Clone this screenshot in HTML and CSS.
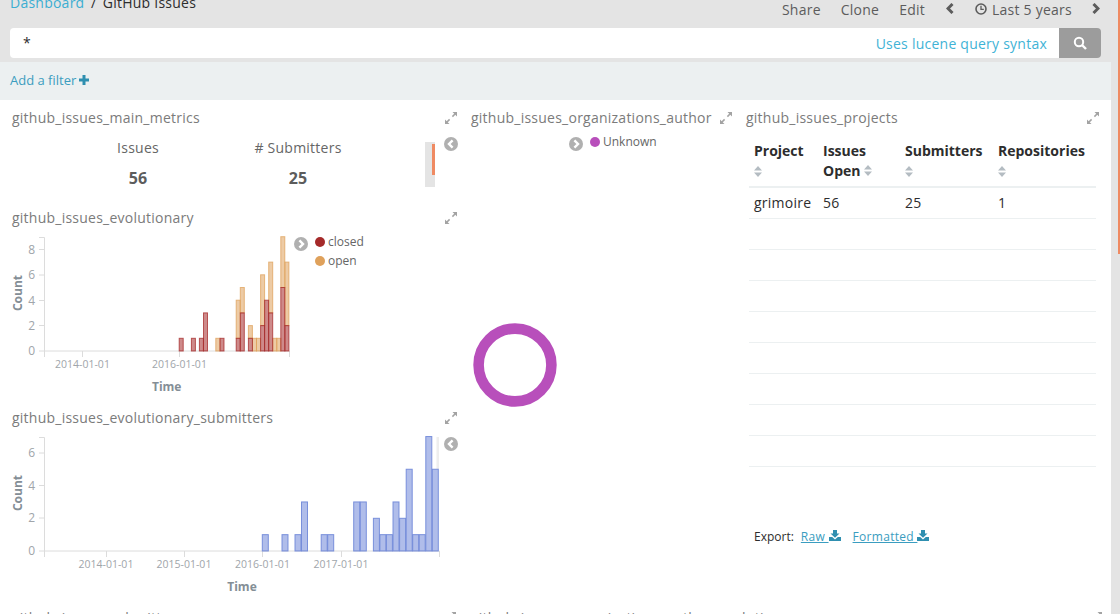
FILE: index.html
```html
<!DOCTYPE html>
<html lang="en">
<head>
    <meta charset="UTF-8">
    <meta name="viewport" content="width=device-width, initial-scale=1.0">
    <title>GitHub Issues - Dashboard</title>
    <link rel="stylesheet" href="styles.css">
</head>
<body>

<svg class="icon-defs" width="0" height="0">
    <symbol id="expand" viewBox="0 0 12 12">
        <path d="M1 11 4.6 7.4M7.4 4.6 11 1" fill="none" stroke="currentColor" stroke-width="1.5"/>
        <path d="M0 12V7.5L4.5 12ZM12 0V4.5L7.5 0Z" fill="currentColor"/>
    </symbol>
    <symbol id="toggle-left" viewBox="0 0 14 14">
        <circle cx="7" cy="7" r="7" fill="currentColor"/>
        <path d="M8.6 3.4 5 7l3.6 3.6" fill="none" stroke="#fff" stroke-width="2.4"/>
    </symbol>
    <symbol id="toggle-right" viewBox="0 0 14 14">
        <circle cx="7" cy="7" r="7" fill="currentColor"/>
        <path d="M5.4 3.4 9 7l-3.6 3.6" fill="none" stroke="#fff" stroke-width="2.4"/>
    </symbol>
    <symbol id="sort" viewBox="0 0 8 11">
        <path d="M4 0 8 4.5H0ZM4 11 0 6.5H8Z" fill="currentColor"/>
    </symbol>
    <symbol id="download" viewBox="0 0 12 11">
        <path d="M4 0H8V3.5H10.5L6 7.8 1.5 3.5H4Z" fill="currentColor"/>
        <path d="M0 7H3.2L6 9.6 8.8 7H12V11H0Z" fill="currentColor"/>
    </symbol>
</svg>

<div class="app">
    <div class="main">
        <nav class="topnav">
            <div class="nav-row">
                <div class="crumbs">
                    <a class="crumb-link">Dashboard</a>
                    <span class="crumb-sep">/</span>
                    <span class="crumb-current">GitHub Issues</span>
                </div>
                <div class="nav-actions">
                    <span>Share</span>
                    <span>Clone</span>
                    <span>Edit</span>
                    <svg class="nav-chevron nav-prev" viewBox="0 0 8 11"><path d="M6.5 1 2 5.5 6.5 10" fill="none" stroke="currentColor" stroke-width="3"/></svg>
                    <span class="time-pick">
                        <svg class="nav-clock" viewBox="0 0 12 12"><circle cx="6" cy="6" r="5" fill="none" stroke="currentColor" stroke-width="1.6"/><path d="M6 2.8V6.4H8.8" fill="none" stroke="currentColor" stroke-width="1.3"/></svg>
                        Last 5 years
                    </span>
                    <svg class="nav-chevron" viewBox="0 0 8 11"><path d="M1.5 1 6 5.5 1.5 10" fill="none" stroke="currentColor" stroke-width="3"/></svg>
                </div>
            </div>
            <div class="search-bar">
                <div class="search-input">
                    <span class="query">*</span>
                    <a class="query-hint">Uses lucene query syntax</a>
                </div>
                <div class="search-btn">
                    <svg width="14" height="14" viewBox="0 0 14 14"><circle cx="6" cy="6" r="4.2" fill="none" stroke="#fff" stroke-width="2"/><path d="M9 9 13 13" stroke="#fff" stroke-width="2.4"/></svg>
                </div>
            </div>
        </nav>

        <div class="filter-bar">
            <a class="add-filter">Add a filter</a>
            <svg class="plus" viewBox="0 0 10 10"><path d="M3.5 0H6.5V3.5H10V6.5H6.5V10H3.5V6.5H0V3.5H3.5Z" fill="currentColor"/></svg>
        </div>

        <div class="dashboard">
            <section class="panel panel-first">
                <header class="panel-head">
                    <span class="panel-title">github_issues_main_metrics</span>
                    <svg class="expand"><use href="#expand"/></svg>
                </header>
                <div class="metrics">
                    <div class="metric">
                        <div class="metric-label">Issues</div>
                        <div class="metric-value">56</div>
                    </div>
                    <div class="metric">
                        <div class="metric-label"># Submitters</div>
                        <div class="metric-value">25</div>
                    </div>
                    <div class="metric-scroll"><div class="metric-thumb"></div></div>
                    <svg class="toggle"><use href="#toggle-left"/></svg>
                </div>
            </section>

            <section class="panel panel-middle">
                <header class="panel-head">
                    <span class="panel-title">github_issues_organizations_author</span>
                    <svg class="expand"><use href="#expand"/></svg>
                </header>
                <div class="vis">
                    <svg class="donut" viewBox="0 0 104 472">
                        <circle cx="50" cy="237" r="36.4" fill="none" stroke="#b84fbb" stroke-width="10.6"/>
                    </svg>
                    <svg class="toggle"><use href="#toggle-right"/></svg>
                    <ul class="legend">
                        <li><i class="dot dot-unknown"></i>Unknown</li>
                    </ul>
                </div>
            </section>

            <section class="panel panel-projects">
                <header class="panel-head">
                    <span class="panel-title">github_issues_projects</span>
                    <svg class="expand"><use href="#expand"/></svg>
                </header>
                <table class="data-table">
                    <thead>
                        <tr>
                            <th class="col-project">Project <svg class="sort sort-block"><use href="#sort"/></svg></th>
                            <th class="col-open">Issues Open <svg class="sort"><use href="#sort"/></svg></th>
                            <th class="col-subs">Submitters <svg class="sort sort-block"><use href="#sort"/></svg></th>
                            <th>Repositories <svg class="sort sort-block"><use href="#sort"/></svg></th>
                        </tr>
                    </thead>
                    <tbody>
                        <tr><td>grimoire</td><td>56</td><td>25</td><td>1</td></tr>
                        <tr><td colspan="4">&nbsp;</td></tr>
                        <tr><td colspan="4">&nbsp;</td></tr>
                        <tr><td colspan="4">&nbsp;</td></tr>
                        <tr><td colspan="4">&nbsp;</td></tr>
                        <tr><td colspan="4">&nbsp;</td></tr>
                        <tr><td colspan="4">&nbsp;</td></tr>
                        <tr><td colspan="4">&nbsp;</td></tr>
                        <tr><td colspan="4">&nbsp;</td></tr>
                    </tbody>
                </table>
                <div class="export">
                    <span class="export-label">Export:</span>
                    <a class="export-link">Raw <svg class="download"><use href="#download"/></svg></a>
                    <a class="export-link">Formatted <svg class="download"><use href="#download"/></svg></a>
                </div>
            </section>

            <section class="panel panel-first">
                <header class="panel-head">
                    <span class="panel-title">github_issues_evolutionary</span>
                    <svg class="expand"><use href="#expand"/></svg>
                </header>
                <div class="vis">
                    <svg class="chart chart-small" viewBox="0 228 294 172">
                        <g class="axis">
                            <path d="M39 237.5H44.5V351M39 249.5H44M39 275H44M39 300.5H44M39 325.5H44M39 351H289.5V357M44.5 351V357M82.5 351V357M179.5 351V357"/>
                        </g>
                        <g class="tick">
                            <text x="35" y="254" text-anchor="end">8</text>
                            <text x="35" y="279" text-anchor="end">6</text>
                            <text x="35" y="305" text-anchor="end">4</text>
                            <text x="35" y="330" text-anchor="end">2</text>
                            <text x="35" y="355" text-anchor="end">0</text>
                            <text x="82.5" y="368" text-anchor="middle">2014-01-01</text>
                            <text x="179.5" y="368" text-anchor="middle">2016-01-01</text>
                        </g>
                        <text class="axis-title" x="166.7" y="391" text-anchor="middle">Time</text>
                        <text class="axis-title" transform="translate(21.5 293) rotate(-90)" text-anchor="middle">Count</text>
                        <g class="bars bars-open">
                            <rect x="215.8" y="338.3" width="4" height="12.7"/>
                            <rect x="236.2" y="300.2" width="4" height="38.1"/>
                            <rect x="240.3" y="287.5" width="4" height="25.4"/>
                            <rect x="248.4" y="325.6" width="4" height="12.7"/>
                            <rect x="252.5" y="338.3" width="4" height="12.7"/>
                            <rect x="256.5" y="338.3" width="4" height="12.7"/>
                            <rect x="260.6" y="274.8" width="4" height="50.8"/>
                            <rect x="268.7" y="262.1" width="4" height="50.8"/>
                            <rect x="272.7" y="338.3" width="4" height="12.7"/>
                            <rect x="276.8" y="338.3" width="4" height="12.7"/>
                            <rect x="280.8" y="236.7" width="4" height="50.8"/>
                            <rect x="284.9" y="262.1" width="4" height="63.5"/>
                        </g>
                        <g class="bars bars-closed">
                            <rect x="179.2" y="338.3" width="4" height="12.7"/>
                            <rect x="191.4" y="338.3" width="4" height="12.7"/>
                            <rect x="199.4" y="338.3" width="4" height="12.7"/>
                            <rect x="203.5" y="312.9" width="4" height="38.1"/>
                            <rect x="220" y="338.3" width="4" height="12.7"/>
                            <rect x="236.2" y="338.3" width="4" height="12.7"/>
                            <rect x="240.3" y="312.9" width="4" height="38.1"/>
                            <rect x="248.4" y="338.3" width="4" height="12.7"/>
                            <rect x="260.6" y="325.6" width="4" height="25.4"/>
                            <rect x="264.6" y="300.2" width="4" height="50.8"/>
                            <rect x="268.7" y="312.9" width="4" height="38.1"/>
                            <rect x="280.8" y="287.5" width="4" height="63.5"/>
                            <rect x="284.9" y="325.6" width="4" height="25.4"/>
                        </g>
                    </svg>
                    <svg class="toggle"><use href="#toggle-right"/></svg>
                    <ul class="legend">
                        <li><i class="dot dot-closed"></i>closed</li>
                        <li><i class="dot dot-open"></i>open</li>
                    </ul>
                </div>
            </section>

            <section class="panel panel-first">
                <header class="panel-head">
                    <span class="panel-title">github_issues_evolutionary_submitters</span>
                    <svg class="expand"><use href="#expand"/></svg>
                </header>
                <div class="vis">
                    <svg class="chart chart-wide" viewBox="0 428 444 172">
                        <rect class="legend-strip" x="436.5" y="437" width="2.5" height="32"/>
                        <g class="axis">
                            <path d="M39 437.5H44.5V551M39 453H44M39 485.5H44M39 518H44M39 551H439.5V557M44.5 551V557M106.5 551V557M184.5 551V557M262.5 551V557M341.5 551V557"/>
                        </g>
                        <g class="tick">
                            <text x="35" y="457" text-anchor="end">6</text>
                            <text x="35" y="490" text-anchor="end">4</text>
                            <text x="35" y="522" text-anchor="end">2</text>
                            <text x="35" y="555" text-anchor="end">0</text>
                            <text x="106" y="568" text-anchor="middle">2014-01-01</text>
                            <text x="184" y="568" text-anchor="middle">2015-01-01</text>
                            <text x="262.5" y="568" text-anchor="middle">2016-01-01</text>
                            <text x="341" y="568" text-anchor="middle">2017-01-01</text>
                        </g>
                        <text class="axis-title" x="242" y="591" text-anchor="middle">Time</text>
                        <text class="axis-title" transform="translate(21.5 493) rotate(-90)" text-anchor="middle">Count</text>
                        <g class="bars bars-submitters">
                            <rect x="262.3" y="534.65" width="6" height="16.35"/>
                            <rect x="282" y="534.65" width="6" height="16.35"/>
                            <rect x="295" y="534.65" width="6" height="16.35"/>
                            <rect x="301.5" y="501.95" width="6" height="49.05"/>
                            <rect x="321.2" y="534.65" width="6" height="16.35"/>
                            <rect x="327.7" y="534.65" width="6" height="16.35"/>
                            <rect x="353.7" y="501.95" width="6" height="49.05"/>
                            <rect x="360.3" y="501.95" width="6" height="49.05"/>
                            <rect x="373.4" y="518.3" width="6" height="32.7"/>
                            <rect x="379.9" y="534.65" width="6" height="16.35"/>
                            <rect x="386.4" y="534.65" width="6" height="16.35"/>
                            <rect x="393" y="501.95" width="6" height="49.05"/>
                            <rect x="399.6" y="518.3" width="6" height="32.7"/>
                            <rect x="406.2" y="469.25" width="6" height="81.75"/>
                            <rect x="412.7" y="534.65" width="6" height="16.35"/>
                            <rect x="419.2" y="534.65" width="6" height="16.35"/>
                            <rect x="425.8" y="436.55" width="6" height="114.45"/>
                            <rect x="432.3" y="469.25" width="6" height="81.75"/>
                        </g>
                    </svg>
                    <svg class="toggle"><use href="#toggle-left"/></svg>
                </div>
            </section>

            <section class="panel panel-first panel-bottom">
                <header class="panel-head">
                    <span class="panel-title">github_issues_submitters</span>
                    <svg class="expand"><use href="#expand"/></svg>
                </header>
            </section>
            <section class="panel panel-bottom panel-bottom-wide">
                <header class="panel-head">
                    <span class="panel-title">github_issues_organizations_author_evolutionary</span>
                    <svg class="expand"><use href="#expand"/></svg>
                </header>
            </section>
        </div>
    </div>

    <div class="page-scroll"><div class="page-thumb"></div></div>
</div>

</body>
</html>
```

FILE: styles.css
```css
body {
    margin: 0;
    font-family: "Open Sans", "Noto Sans", sans-serif;
    font-size: 14px;
    line-height: 20px;
    letter-spacing: 0.24px;
    color: #2d2d2d;
    background: #fff;
    overflow: hidden;
}
ul {
    list-style: none;
    margin: 0;
    padding: 0;
}
.icon-defs {
    position: absolute;
}
.app {
    display: flex;
    height: 614px;
    overflow: hidden;
}
.main {
    width: 1111px;
    flex: none;
}
.page-scroll {
    flex: 1;
    background: #e4e4e4;
}
.page-thumb {
    width: 2px;
    height: 254px;
    margin-left: 7px;
    background: #ef8a62;
}

/* top bar */
.topnav {
    height: 62px;
    background: #e4e4e4;
    overflow: hidden;
}
.nav-row {
    display: flex;
    justify-content: space-between;
    height: 28px;
    padding: 0 11px 0 10px;
}
.crumbs {
    display: flex;
    gap: 6.5px;
    margin-top: -7px;
}
.crumb-link {
    color: #3caed2;
}
.crumb-sep,
.crumb-current {
    color: #2d2d2d;
}
.nav-actions {
    display: flex;
    align-items: flex-start;
    gap: 20px;
    color: #5c5c5c;
}
.time-pick {
    display: flex;
    align-items: center;
    gap: 5px;
    margin-left: 1px;
}
.nav-chevron {
    width: 8px;
    height: 11px;
    margin-top: 3px;
}
.nav-prev {
    margin-left: 1px;
}
.nav-clock {
    width: 12px;
    height: 12px;
    margin-top: -3px;
}
.search-bar {
    display: flex;
    height: 30px;
    margin: 0 10px;
}
.search-input {
    flex: 1;
    display: flex;
    justify-content: space-between;
    align-items: center;
    padding: 0 12px 0 13px;
    background: #fff;
    border-radius: 4px 0 0 4px;
}
.query-hint {
    color: #3fb3d6;
    margin-top: 2px;
}
.search-btn {
    display: flex;
    align-items: center;
    justify-content: center;
    width: 42px;
    background: #9c9c9c;
    border-radius: 0 4px 4px 0;
}
.filter-bar {
    display: flex;
    align-items: center;
    gap: 3px;
    box-sizing: border-box;
    height: 38px;
    padding: 0 0 2px 10px;
    background: #ecf0f1;
    font-size: 13px;
    letter-spacing: 0;
    color: #3b9dbf;
}
.plus {
    width: 10px;
    height: 10px;
    color: #2f8fb0;
}

/* dashboard grid */
.dashboard {
    display: grid;
    grid-template-columns: 465px 275px 371px;
    grid-template-rows: 100px 200px 200px 200px;
}
.panel {
    min-width: 0;
}
.panel-middle {
    grid-column: 2;
    grid-row: 1 / 4;
}
.panel-projects {
    grid-column: 3;
    grid-row: 1 / 4;
}
.panel-bottom-wide {
    grid-column: 2 / 4;
}
.panel-head {
    display: flex;
    justify-content: space-between;
    align-items: center;
    height: 20px;
    padding: 8px 8px 0 6px;
}
.panel-first .panel-head {
    padding-left: 12px;
}
.panel-projects .panel-head {
    padding-right: 12px;
}
.panel-bottom .panel-head {
    padding-right: 9px;
}
.panel-title {
    color: #7b7b7b;
    white-space: nowrap;
}
.expand {
    width: 12px;
    height: 12px;
    color: #a3a3a3;
}
.toggle {
    flex: none;
    width: 14px;
    height: 14px;
    margin-top: 9px;
    color: #b0b0b0;
}

/* metrics */
.metrics {
    display: flex;
    align-items: flex-start;
    padding-left: 58px;
}
.metric {
    width: 160px;
    padding-top: 10px;
    text-align: center;
}
.metric-label {
    color: #666;
}
.metric-value {
    margin-top: 10px;
    font-size: 16px;
    font-weight: 700;
    letter-spacing: 0;
    color: #5c5c5c;
}
.metric-scroll {
    width: 10px;
    height: 45px;
    margin: 14px 9px 0 47px;
    background: #e4e4e4;
    box-sizing: border-box;
    padding: 2px 0 0 7px;
}
.metric-thumb {
    width: 3px;
    height: 31px;
    background: #ef8a62;
}

/* visualizations */
.vis {
    display: flex;
    align-items: flex-start;
}
.chart {
    flex: none;
    height: 172px;
    letter-spacing: 0;
}
.chart-small {
    width: 294px;
}
.chart-wide {
    width: 444px;
}
.donut {
    flex: none;
    width: 104px;
    height: 472px;
}
.legend {
    margin-left: 7px;
    padding-top: 4px;
    font-size: 12px;
    letter-spacing: 0;
    color: #666;
}
.legend li {
    display: flex;
    align-items: center;
    gap: 3px;
    height: 19px;
}
.dot {
    width: 10px;
    height: 10px;
    border-radius: 50%;
}
.dot-closed {
    background: #a52a2a;
}
.dot-open {
    background: #dfa15b;
}
.dot-unknown {
    background: #b84fbb;
}
.axis path {
    fill: none;
    stroke: #dcdcdc;
    stroke-width: 1;
}
.tick text {
    font-size: 10.5px;
    fill: #a0a5aa;
}
.tick text[text-anchor="end"] {
    font-size: 12px;
}
.axis-title {
    font-size: 12px;
    font-weight: 700;
    fill: #848e96;
}
.bars rect {
    fill-opacity: 0.55;
    stroke-width: 1;
    stroke-opacity: 0.75;
}
.bars-closed rect {
    fill: #a52a2a;
    stroke: #a52a2a;
}
.bars-open rect {
    fill: #dfa15b;
    stroke: #dfa15b;
}
.bars-submitters rect {
    fill: #6f87d8;
    stroke: #6f87d8;
    stroke-opacity: 0.9;
}
.legend-strip {
    fill: #eee;
}

/* table */
.data-table {
    width: 347px;
    margin: 13px 0 0 9px;
    border-spacing: 0;
    table-layout: fixed;
}
.data-table th {
    padding: 0 5px 5px;
    text-align: left;
    vertical-align: top;
    font-weight: 700;
    letter-spacing: 0;
    border-bottom: 2px solid #ecf0f1;
}
.data-table td {
    padding: 5px;
    border-bottom: 1px solid #ecf0f1;
}
.col-project {
    width: 59px;
}
.col-open {
    width: 72px;
}
.col-subs {
    width: 83px;
}
.sort {
    width: 8px;
    height: 11px;
    color: #b4bcc2;
}
.sort-block {
    display: block;
    margin-top: 5px;
    margin-bottom: 4px;
}
.export {
    display: flex;
    margin: 60px 0 0 14px;
    font-size: 12px;
    letter-spacing: 0;
}
.export-label {
    margin-right: 7px;
}
.export-link {
    margin-right: 12px;
    letter-spacing: 0.3px;
    color: #3a9dc0;
    text-decoration: underline;
}
.download {
    width: 12px;
    height: 11px;
    color: #2f8fb0;
}
```
